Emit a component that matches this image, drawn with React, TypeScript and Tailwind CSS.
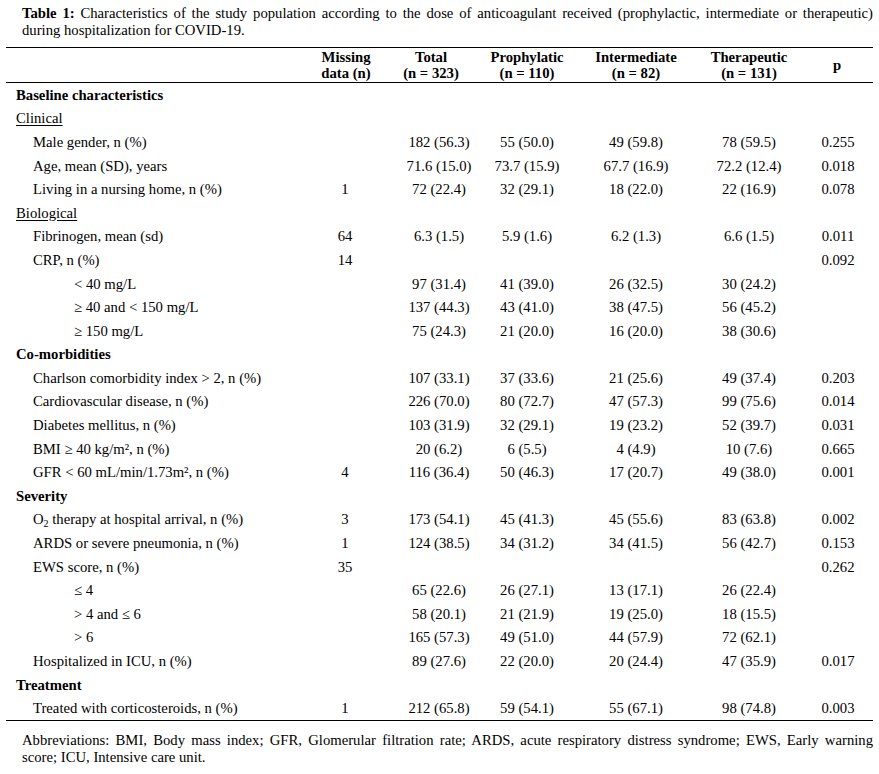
import React from 'react'

type Row = {
  label: React.ReactNode
  kind: 'section' | 'group' | 'item' | 'sub'
  missing?: string
  vals?: string[]
  p?: string
}

const rows: Row[] = [
  { label: 'Baseline characteristics', kind: 'section' },
  { label: 'Clinical', kind: 'group' },
  { label: 'Male gender, n (%)', kind: 'item', vals: ['182 (56.3)', '55 (50.0)', '49 (59.8)', '78 (59.5)'], p: '0.255' },
  { label: 'Age, mean (SD), years', kind: 'item', vals: ['71.6 (15.0)', '73.7 (15.9)', '67.7 (16.9)', '72.2 (12.4)'], p: '0.018' },
  { label: 'Living in a nursing home, n (%)', kind: 'item', missing: '1', vals: ['72 (22.4)', '32 (29.1)', '18 (22.0)', '22 (16.9)'], p: '0.078' },
  { label: 'Biological', kind: 'group' },
  { label: 'Fibrinogen, mean (sd)', kind: 'item', missing: '64', vals: ['6.3 (1.5)', '5.9 (1.6)', '6.2 (1.3)', '6.6 (1.5)'], p: '0.011' },
  { label: 'CRP, n (%)', kind: 'item', missing: '14', p: '0.092' },
  { label: '< 40 mg/L', kind: 'sub', vals: ['97 (31.4)', '41 (39.0)', '26 (32.5)', '30 (24.2)'] },
  { label: '≥ 40 and < 150 mg/L', kind: 'sub', vals: ['137 (44.3)', '43 (41.0)', '38 (47.5)', '56 (45.2)'] },
  { label: '≥ 150 mg/L', kind: 'sub', vals: ['75 (24.3)', '21 (20.0)', '16 (20.0)', '38 (30.6)'] },
  { label: 'Co-morbidities', kind: 'section' },
  { label: 'Charlson comorbidity index > 2, n (%)', kind: 'item', vals: ['107 (33.1)', '37 (33.6)', '21 (25.6)', '49 (37.4)'], p: '0.203' },
  { label: 'Cardiovascular disease, n (%)', kind: 'item', vals: ['226 (70.0)', '80 (72.7)', '47 (57.3)', '99 (75.6)'], p: '0.014' },
  { label: 'Diabetes mellitus, n (%)', kind: 'item', vals: ['103 (31.9)', '32 (29.1)', '19 (23.2)', '52 (39.7)'], p: '0.031' },
  { label: 'BMI ≥ 40 kg/m², n (%)', kind: 'item', vals: ['20 (6.2)', '6 (5.5)', '4 (4.9)', '10 (7.6)'], p: '0.665' },
  { label: 'GFR < 60 mL/min/1.73m², n (%)', kind: 'item', missing: '4', vals: ['116 (36.4)', '50 (46.3)', '17 (20.7)', '49 (38.0)'], p: '0.001' },
  { label: 'Severity', kind: 'section' },
  {
    label: (
      <>
        O<sub className="text-[10px]">2</sub> therapy at hospital arrival, n (%)
      </>
    ),
    kind: 'item', missing: '3', vals: ['173 (54.1)', '45 (41.3)', '45 (55.6)', '83 (63.8)'], p: '0.002',
  },
  { label: 'ARDS or severe pneumonia, n (%)', kind: 'item', missing: '1', vals: ['124 (38.5)', '34 (31.2)', '34 (41.5)', '56 (42.7)'], p: '0.153' },
  { label: 'EWS score, n (%)', kind: 'item', missing: '35', p: '0.262' },
  { label: '≤ 4', kind: 'sub', vals: ['65 (22.6)', '26 (27.1)', '13 (17.1)', '26 (22.4)'] },
  { label: '> 4 and ≤ 6', kind: 'sub', vals: ['58 (20.1)', '21 (21.9)', '19 (25.0)', '18 (15.5)'] },
  { label: '> 6', kind: 'sub', vals: ['165 (57.3)', '49 (51.0)', '44 (57.9)', '72 (62.1)'] },
  { label: 'Hospitalized in ICU, n (%)', kind: 'item', vals: ['89 (27.6)', '22 (20.0)', '20 (24.4)', '47 (35.9)'], p: '0.017' },
  { label: 'Treatment', kind: 'section' },
  { label: 'Treated with corticosteroids, n (%)', kind: 'item', missing: '1', vals: ['212 (65.8)', '59 (54.1)', '55 (67.1)', '98 (74.8)'], p: '0.003' },
]

const cols = 'grid grid-cols-[304px_72px_98px_94px_124px_102px_74px]'

const labelClass = {
  section: 'pl-[10px] font-bold',
  group: 'pl-[10px] underline underline-offset-2',
  item: 'pl-[27px]',
  sub: 'pl-[68px]',
}

const App = () => {
  return (
    <div className="w-[879px] h-[774px] bg-white text-black font-['Liberation_Serif',serif] text-[14.7px]">
      <div className="pl-[22px] pr-[6px] pt-[5px] leading-[17px]">
        <div className="text-justify [text-align-last:justify]">
          <span className="font-bold">Table 1:</span> Characteristics of the study population according to the dose of
          anticoagulant received (prophylactic, intermediate or therapeutic)
        </div>
        <div>during hospitalization for COVID-19.</div>
      </div>

      <div className="mx-[6px] mt-[8px] border-t-[1.5px] border-b-[1.5px] border-black">
        <div className={`${cols} h-[34px] items-center font-bold leading-[16px] text-center`}>
          <div />
          <div>Missing<br />data (n)</div>
          <div>Total<br />(n = 323)</div>
          <div>Prophylatic<br />(n = 110)</div>
          <div>Intermediate<br />(n = 82)</div>
          <div>Therapeutic<br />(n = 131)</div>
          <div>p</div>
        </div>
      </div>

      <div className="mx-[6px] border-b-[1.5px] border-black">
        {rows.map((r, i) => (
          <div key={i} className={`${cols} h-[23.6px] items-center whitespace-nowrap`}>
            <div className={labelClass[r.kind]}>{r.label}</div>
            <div className="text-center pr-[2px]">{r.missing}</div>
            <div className="text-center pl-[16px]">{r.vals?.[0]}</div>
            <div className="text-center">{r.vals?.[1]}</div>
            <div className="text-center">{r.vals?.[2]}</div>
            <div className="text-center">{r.vals?.[3]}</div>
            <div className="text-center pl-[2px]">{r.p}</div>
          </div>
        ))}
      </div>

      <div className="pl-[22px] pr-[6px] pt-[11px] leading-[17px]">
        <div className="text-justify [text-align-last:justify]">
          Abbreviations: BMI, Body mass index; GFR, Glomerular filtration rate; ARDS, acute respiratory distress
          syndrome; EWS, Early warning
        </div>
        <div>score; ICU, Intensive care unit.</div>
      </div>
    </div>
  )
}

export default App
